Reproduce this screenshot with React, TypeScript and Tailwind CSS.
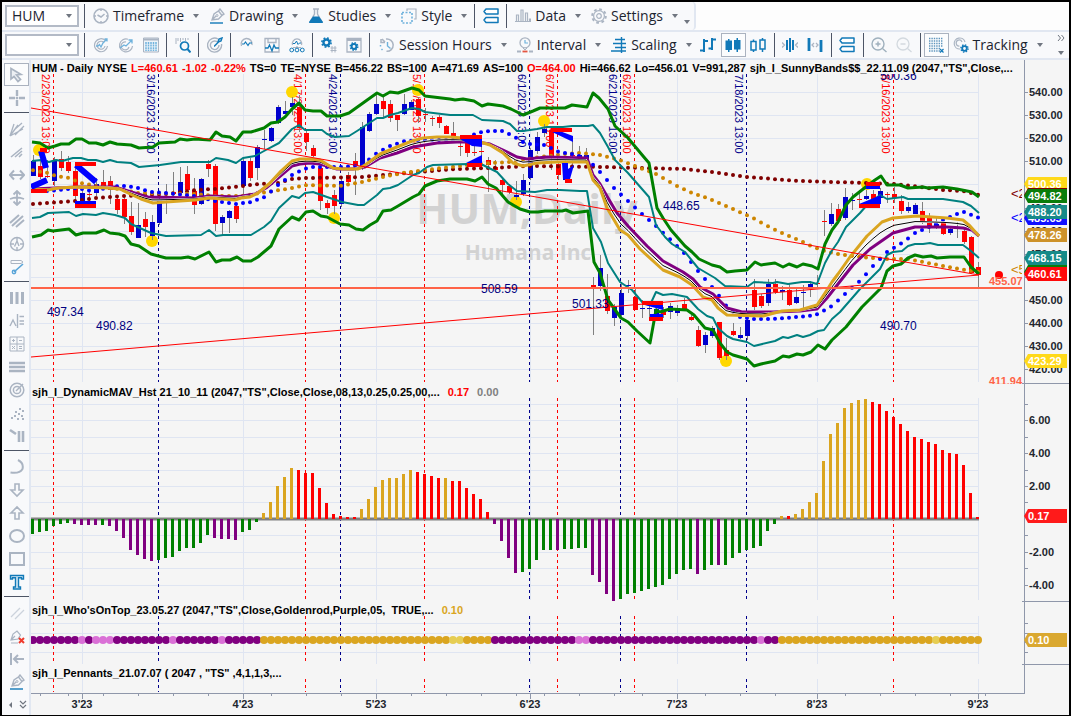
import type { ReactNode } from "react";

const BLUE = "#1179b8";
const SKY = "#6fb2dc";
const GRAY = "#aab4c2";
const NAVY = "#00008b";
const GOLD = "#daa520";
const TOMATO = "#ff6347";
const GRID = "#dfe5f2";
const AXIS = "#8f97aa";

// ---------------------------------------------------------------- icons

const ICONS: Record<string, ReactNode> = {
    clock: (
        <g fill="none" stroke={GRAY}>
            <circle cx="8" cy="8" r="7" strokeWidth="1.6" />
            <path d="M4.5 7 8 9l3.5-3M8 1v2M8 13v2M1 8h2M13 8h2" strokeWidth="1.5" />
        </g>
    ),
    pen: (
        <g fill="none">
            <path d="M3 12 5 6l4.5-3L13 7.500 9.500 11zM3 12l4-4M9.500 3 11 1l4 5-2 1.500" stroke={GRAY} strokeWidth="1.4" />
            <circle cx="8" cy="7.500" r="1" stroke={GRAY} />
            <path d="M1 15h13" stroke={BLUE} strokeWidth="1.4" />
        </g>
    ),
    flask: (
        <g>
            <path d="M5 1h6M6.500 1v5L2 14h12L9.500 6V1" fill="none" stroke={GRAY} strokeWidth="1.4" />
            <path d="M5 8.500h6l4 5.500q.2 1-1 1H2q-1.200 0-1-1z" fill={BLUE} />
        </g>
    ),
    style: (
        <g fill="none">
            <path d="M6 3V1h9v10h-2" stroke={GRAY} strokeWidth="1.2" />
            <path d="M1 4.500h10V15H1z" stroke={SKY} strokeWidth="1.6" strokeDasharray="2 1.5" />
        </g>
    ),
    stack: (
        <path d="M1 3.500 3 1h12v5H3zM1 12 3 9.500h12v5H3z" fill="#fff" stroke={BLUE} strokeWidth="1.5" strokeLinejoin="round" />
    ),
    data: (
        <path d="M1.500 13V7h2v6M6 13V2h2v11M10.500 13V5h2v8M14.500 13v-2h1v2M0 13.500h16" fill="none" stroke={GRAY} strokeWidth="1.2" />
    ),
    gear: (
        <g fill="none" stroke={GRAY}>
            <circle cx="8" cy="8" r="6.800" strokeWidth="2" strokeDasharray="2.7 2.64" />
            <circle cx="8" cy="8" r="5.400" strokeWidth="1.2" />
            <circle cx="8" cy="8" r="2.300" strokeWidth="1.2" />
        </g>
    ),
    targetWave: (
        <g fill="none">
            <path d="M12.5 3.500A6.500 6.500 0 1 0 14.5 9M11 5.500A4 4 0 1 0 12 9" stroke={GRAY} strokeWidth="1.2" />
            <path d="M3 9h2l1.500-1.500L8 10l2-4 4-4M11.500 2H14v2.500" stroke={SKY} strokeWidth="1.3" />
        </g>
    ),
    targetArrow: (
        <g fill="none">
            <path d="M10 2.200A6.500 6.500 0 1 0 14.5 9M11 10a4 4 0 1 1-3-5" stroke={GRAY} strokeWidth="1.2" />
            <path d="m2 11 4-3 2 1 6-6M10.500 3H14v3.500" stroke={SKY} strokeWidth="1.3" />
        </g>
    ),
    grid: (
        <g>
            <path d="M.5 1h15v14H.5z" fill="#eef4f9" stroke={GRAY} />
            <path d="M1 2.500h14" stroke={GRAY} strokeWidth="2" />
            <path d="M3 5v9M5.500 5v9M8 5v9M10.500 5v9M13 5v9" stroke={SKY} strokeWidth="1.5" strokeDasharray="2 .6" />
        </g>
    ),
    search: (
        <g fill="none">
            <path d="M1 1v6M3 1v3M5.500 1v4M8 1v2M10.500 1v3M13 1v2" stroke={GRAY} />
            <circle cx="9.500" cy="9" r="4" stroke={BLUE} strokeWidth="1.7" />
            <path d="m12.500 12 3 3.500" stroke={BLUE} strokeWidth="2" />
        </g>
    ),
    target: (
        <g fill="none">
            <path d="M11 2A7 7 0 1 0 14.5 7M11 5.500A4.300 4.300 0 1 0 12 8" stroke={GRAY} strokeWidth="1.4" />
            <path d="m7.500 9 4-4M11 5l1-3 3-1-1 3zM7 9h1" stroke={BLUE} strokeWidth="1.5" />
        </g>
    ),
    pulse: (
        <g fill="none">
            <path d="M2.500 9A5.500 5.500 0 1 1 13 8" stroke={GRAY} strokeWidth="1.4" />
            <path d="M3 7h2l1.500-2L9 8.500 10.500 6H13" stroke={BLUE} strokeWidth="1.2" />
        </g>
    ),
    pulseSave: (
        <g fill="none">
            <path d="M1 15V1.500h14V15zM4 1.500v4h8v-4" stroke={GRAY} strokeWidth="1.3" />
            <path d="M1 11h3l1.500-3L8 14l2-6 1.500 3H15" stroke={BLUE} strokeWidth="1.3" />
        </g>
    ),
    pulseTree: (
        <g fill="none">
            <path d="M3.500 8A4.700 4.700 0 1 1 12.500 8M8 9v2M4 10.500h8" stroke={GRAY} strokeWidth="1.2" />
            <path d="M4 6.500h2L7.500 4 9 7.500 10.500 6H12" stroke={BLUE} />
            <circle cx="2.700" cy="13" r="1.900" stroke={BLUE} />
            <circle cx="8" cy="13" r="1.900" stroke={BLUE} />
            <circle cx="13.300" cy="13" r="1.900" stroke={BLUE} />
        </g>
    ),
    gearHash: (
        <g fill="none">
            <circle cx="5.500" cy="5.500" r="3" stroke={BLUE} strokeWidth="2.4" />
            <circle cx="5.500" cy="5.500" r="4.600" stroke={BLUE} strokeWidth="1.6" strokeDasharray="1.8 1.81" />
            <path d="M11 9v6.500M14 9v6.500M9.500 11h6M9.500 13.500h6" stroke={GRAY} />
        </g>
    ),
    gearWindow: (
        <g fill="none">
            <path d="M1 1.500h14V15H1z" stroke={GRAY} strokeWidth="1.3" />
            <path d="M1 3h14" stroke={GRAY} strokeWidth="2" />
            <circle cx="8" cy="9.500" r="2.400" stroke={BLUE} strokeWidth="2" />
            <circle cx="8" cy="9.500" r="3.800" stroke={BLUE} strokeWidth="1.4" strokeDasharray="1.5 1.48" />
        </g>
    ),
    session: (
        <g fill="none">
            <path d="M7 2a6.200 6.200 0 1 1 .5 12.3M2 2v3.500h4M6 5 3 2" stroke={GRAY} strokeWidth="1.5" />
            <path d="M1.500 8v1.500M2.500 12l1 1" stroke={SKY} strokeWidth="1.5" />
            <path d="M8.500 5v4l3 2.500" stroke={SKY} strokeWidth="1.4" />
        </g>
    ),
    interval: (
        <g fill="none">
            <circle cx="8" cy="5.800" r="5" stroke={GRAY} strokeWidth="1.3" />
            <path d="M8 3v3h3" stroke={SKY} strokeWidth="1.2" />
            <path d="m6 11 2 2 2-2" stroke={GRAY} />
            <path d="M0 14.500h4M12 14.500h4" stroke={GRAY} strokeWidth="1.8" />
            <path d="M5.500 14.500h5" stroke="#e35541" strokeWidth="1.8" />
        </g>
    ),
    scaling: (
        <path d="M10.500 0v16M4 2.500h10M2 6.500h13M4 10.500h11M0 14h15" fill="none" stroke={BLUE} strokeWidth="1.4" />
    ),
    ohlc: (
        <path d="M4 2v13M0 13.500h4M4 4h4M12 1v12M8.500 11.500H12M12 2.500h4" fill="none" stroke={BLUE} strokeWidth="2" />
    ),
    candles: (
        <g fill={BLUE}>
            <path d="M.5 3.500H7V13H.5zM9 3h6.500v9.500H9z" />
            <path d="M3 2h1.500v13H3zM11.500 1H13v14h-1.500z" />
        </g>
    ),
    hollow: (
        <path d="M1 4.500h5V13H1zM3.500 2.500v2M3.500 13v2M10 3h5v9h-5zM12.500 1v2M12.500 12v3" fill="none" stroke={BLUE} strokeWidth="1.5" />
    ),
    squeeze: (
        <g fill="none">
            <path d="M5 3v10M8 1v14M11 3v10" stroke={BLUE} strokeWidth="2" />
            <path d="m0 5.500 2.500 2.500L0 10.500M16 5.500 13.500 8l2.500 2.500" stroke={GRAY} strokeWidth="1.3" />
        </g>
    ),
    spread: (
        <g fill="none">
            <path d="M2 1v13M14 3v12" stroke={BLUE} strokeWidth="2.8" />
            <path d="M7 6 5 8l2 2M9 6l2 2-2 2" stroke={GRAY} strokeWidth="1.3" />
        </g>
    ),
    zoomIn: (
        <g fill="none" stroke="#9fb0bd" strokeWidth="1.4">
            <circle cx="7" cy="7" r="6" />
            <path d="m11.500 11.500 4 3.500M4.500 7h5M7 4.500v5" />
        </g>
    ),
    zoomOut: (
        <g fill="none" stroke="#d3d9df" strokeWidth="1.3">
            <circle cx="7" cy="7" r="6" />
            <path d="m11.500 11.500 4 3.500M4.500 7h5" />
        </g>
    ),
    dots: (
        <g fill="none">
            <path d="M1 1.500h14M1 4h14M1 6.500h14M1 9h14M1 11.500h11M1 14h11" stroke="#5f95bd" strokeWidth="1.4" strokeDasharray="1.4 1" />
            <path d="m12 12 3.500 3.500m0-3.500L12 15.500" stroke={BLUE} strokeWidth="1.2" />
        </g>
    ),
    tracking: (
        <g fill="none">
            <path d="M7 12A5.500 5.500 0 1 1 12 5M6.500 9A3 3 0 1 1 9 5" stroke={GRAY} strokeWidth="1.2" />
            <circle cx="11.500" cy="11.500" r="2.300" stroke={BLUE} strokeWidth="1.8" />
            <circle cx="11.500" cy="11.500" r="3.600" stroke={BLUE} strokeWidth="1.4" strokeDasharray="1.4 1.42" />
        </g>
    ),
    pointer: <path d="M2 1.500v10.500l3-2.500 4 5 2.500-2-4-4.500 4.500-.5z" fill="#eceff3" stroke={GRAY} strokeWidth="1.7" />,
    cross: <path d="M8 0v6M8 10v6M0 8h6M10 8h6M8 7v2M7 8h2" stroke={GRAY} strokeWidth="2.4" />,
    fan: <path d="M1 15 5 3M1 15l8-11M1 15l13-7M5 9l8-7M6 14l9-9" fill="none" stroke={GRAY} strokeWidth="1.3" />,
    speed: <path d="M2 13 13 4M6 13l7-6M10 13l3-3" fill="none" stroke={GRAY} strokeWidth="1.6" />,
    horiz: <path d="M1 8h14M5 3.500.8 8 5 12.500M11 3.500 15.200 8 11 12.500" fill="none" stroke={GRAY} strokeWidth="2" />,
    vert: <path d="M8 2v12M4.500 4.500 8 1l3.500 3.500M4.500 11.500 8 15l3.500-3.500M1 9q7-3 14 0" fill="none" stroke={GRAY} strokeWidth="1.8" />,
    slants: <path d="M1 10 10 2M3 13 14 3M7 14l8-7" fill="none" stroke={GRAY} strokeWidth="2" />,
    compass: (
        <g fill="none" stroke={GRAY} strokeWidth="1.4">
            <circle cx="8" cy="8" r="6.500" />
            <path d="M8 1.500V5M8 11v3.500M1.500 8H5M11 8h3.500M5.500 10.500 8 5l2 5" />
        </g>
    ),
    ruler: (
        <g fill="none">
            <path d="M2 1.500h10l2 1.500-2 1.500H2z" stroke={GRAY} />
            <path d="m5 13 9-8" stroke="#5aa5d8" strokeWidth="1.6" />
            <circle cx="5" cy="13" r="1.700" stroke="#5aa5d8" strokeWidth="1.4" />
        </g>
    ),
    columns: <path d="M2.500 2v12M8 2v12M13.500 2v12" stroke={GRAY} strokeWidth="3" />,
    levels: <path d="M1 13 4 7l3 6M8.500 1v14M10.500 3.500H15M10.500 8H15M10.500 11H15" fill="none" stroke={GRAY} strokeWidth="1.4" />,
    calc: <path d="M1 1h14v14H1zM8 1v14M1 8h14M3 4.500h3M4.500 3v3M10 4.500h3M3 10l3 3m0-3-3 3M10 10.500h3M10 12.500h3" fill="none" stroke={GRAY} />,
    bars: <path d="M0 4h16M0 8h16M0 12h16" stroke={GRAY} strokeWidth="2.6" />,
    arcs: (
        <g fill="none" stroke={GRAY} strokeWidth="1.5">
            <circle cx="8" cy="8" r="6.800" />
            <circle cx="8" cy="8" r="3.600" />
            <path d="m7 9 7-7" />
        </g>
    ),
    scatter: <path d="M2 13h2M5 11h2M8 14h2M6 7h2M9 9h2M12 11h2M10 4h2M13 6h2M13 14h2" stroke={GRAY} strokeWidth="1.8" />,
    gap: <path d="m1 2 6 4M10 3v11M14 3v11" stroke={GRAY} strokeWidth="2.6" />,
    arc: <path d="M9 1q6 3 4.500 9-3 5-12 3.500" fill="none" stroke={GRAY} strokeWidth="2" />,
    down: <path d="M6 2h4v6h4l-6 6-6-6h4z" fill="none" stroke={GRAY} strokeWidth="1.6" />,
    up: <path d="M6 14h4V8h4L8 2 2 8h4z" fill="none" stroke={GRAY} strokeWidth="1.6" />,
    ellipse: <ellipse cx="8" cy="8" rx="7" ry="6" fill="none" stroke={GRAY} strokeWidth="2" />,
    square: <path d="M1 2h14v12H1z" fill="none" stroke={GRAY} strokeWidth="2" />,
    textTool: <path d="M1.500 1.500h13V5h-2V3.800H9.500V13h2v2h-7v-2h2V3.800h-3V5h-2z" fill="#d6eaf6" stroke={BLUE} strokeWidth="1.4" />,
    twoLines: <path d="M2 12 11 3M6 14 15 5" stroke="#ccd3dc" strokeWidth="1.3" />,
    penDelete: (
        <g fill="none">
            <path d="M2 12 4 6l4-3 3.500 4L9 11zM2 12l4-4M2 15h7" stroke={GRAY} strokeWidth="1.2" />
            <path d="m10 10 5 5m0-5-5 5" stroke="#ef3b2d" strokeWidth="2" />
        </g>
    ),
    collapse: <path d="M2 2v12M5 8h10M9 4 5 8l4 4" fill="none" stroke={GRAY} strokeWidth="2" />,
};

const Icon = ({ name }: { name: string }) => (
    <svg viewBox="0 0 16 16" className="h-4 w-4 shrink-0" aria-hidden="true">
        {ICONS[name]}
    </svg>
);

const Caret = () => (
    <svg viewBox="0 0 6 4" className="h-1 w-1.5 shrink-0" aria-hidden="true">
        <path d="M0 0h6L3 4z" fill="#707680" />
    </svg>
);

const Sep = () => <span className="mx-[3px] h-6 w-px shrink-0 bg-[#4d5566]" />;

function IconButton({ icon, label, active = false }: { icon: string; label: string; active?: boolean }) {
    return (
        <button
            aria-label={label}
            className={
                active
                    ? "flex h-6 w-[25px] shrink-0 items-center justify-center border border-[#aab2bf] bg-[#fbfcfd]"
                    : "flex h-6 w-[25px] shrink-0 items-center justify-center"
            }
        >
            <Icon name={icon} />
        </button>
    );
}

function MenuButton({ icon, label }: { icon: string; label: string }) {
    return (
        <button className="flex h-6 shrink-0 items-center gap-1 px-1 text-[14px] leading-5 text-[#1c2430]">
            <Icon name={icon} />
            <span className="mr-[5px]">{label}</span>
            <Caret />
        </button>
    );
}

function Combo({ label, value }: { label: string; value: string }) {
    return (
        <div className="relative mr-0.5 ml-[3px] shrink-0">
            <select
                aria-label={label}
                defaultValue={value}
                className="block h-[22px] w-[74px] appearance-none border-2 border-[#b3bac6] bg-white pl-[5px] text-[14px] leading-4 text-[#1c2430]"
            >
                <option value={value}>{value}</option>
            </select>
            <span className="pointer-events-none absolute top-[9px] right-[7px] flex">
                <Caret />
            </span>
        </div>
    );
}

// ---------------------------------------------------------------- series

const UPPER_GREEN =
    "32,142 40,143 48,148 55,146 61,144 69,144 76,139 82,139 89,143 96,143 103,145 110,142 117,144 131,145 139,148 153,147 159,143 175,142 180,139 187,140 195,139 210,140 216,132 222,136 230,137 236,141 243,132 251,132 264,128 271,123 278,122 285,117 292,109 299,103 305,110 313,111 321,111 327,116 340,116 349,113 363,103 377,93 383,96 390,92 398,93 412,88 419,90 425,96 450,99 455,100 463,99 474,101 482,106 488,104 503,106 511,109 523,115 533,111 540,108 565,108 572,105 587,107 593,93 599,98 608,109 615,126 628,138 643,156 649,163 657,208 663,218 671,230 685,246 692,252 699,259 712,265 720,267 727,272 735,271 747,270 755,262 761,265 775,263 783,267 789,264 797,267 803,264 812,266 818,269 825,244 832,230 838,222 846,205 853,197 867,186 875,180 881,176 887,185 900,185 908,188 923,187 928,188 943,187 957,189 972,192 979,197";
const UPPER_TEAL =
    "32,161 41,160 49,162 56,160 62,161 73,158 81,158 88,160 96,160 103,162 110,160 117,162 131,163 139,167 160,165 181,162 210,162 216,158 228,160 236,163 243,158 255,156 264,151 279,143 292,129 299,125 305,130 322,130 327,134 335,137 349,136 357,131 377,118 383,118 390,115 398,113 412,108 419,109 425,112 450,115 473,115 482,120 503,121 510,124 517,131 523,131 537,129 547,127 563,127 572,126 588,126 593,125 600,133 608,147 615,160 628,173 642,189 649,197 656,225 665,237 672,244 685,252 698,268 715,278 725,286 747,287 754,282 773,283 777,282 788,284 802,282 810,282 817,284 825,263 831,252 838,242 846,227 860,213 867,205 880,195 887,199 903,197 908,199 943,199 963,202 971,206 979,213";
const LOWER_TEAL =
    "32,218 40,217 48,213 69,212 76,216 83,214 96,215 103,213 115,215 125,218 131,224 151,233 166,236 201,235 209,230 216,236 223,235 251,235 264,227 271,221 279,208 292,196 299,198 305,193 313,192 327,197 342,202 358,205 364,205 377,195 383,189 390,188 398,185 413,175 419,173 427,167 433,165 467,164 483,165 497,172 508,184 517,191 535,192 547,190 560,190 580,191 587,191 593,228 601,242 608,263 620,282 632,290 643,303 650,305 656,292 663,295 672,294 687,297 698,309 707,316 713,318 718,328 727,336 733,339 747,342 754,346 775,341 783,337 788,338 797,335 803,337 810,335 818,331 824,330 832,319 840,312 860,289 880,269 887,255 893,252 902,251 908,246 915,244 923,244 930,243 938,245 948,245 963,245 971,251 979,258";
const LOWER_GREEN =
    "32,237 41,235 48,230 53,231 69,229 76,235 83,233 96,233 104,230 110,233 119,234 125,236 131,244 139,246 151,254 166,258 181,258 188,257 195,259 209,252 216,262 222,260 230,260 237,257 243,261 251,261 258,257 271,246 279,229 292,217 299,220 306,212 313,211 321,216 327,217 340,224 349,225 356,229 363,230 370,225 377,221 383,211 391,210 398,206 413,197 419,194 425,186 437,181 450,179 467,179 475,181 482,177 488,184 496,188 508,202 520,209 530,212 538,212 545,211 562,211 566,210 573,213 588,211 594,262 600,273 608,300 621,318 628,322 637,331 650,343 656,310 660,312 670,309 687,310 694,315 705,328 713,330 720,343 727,352 733,355 747,359 754,366 761,364 775,361 783,356 789,357 797,354 803,355 811,352 818,345 825,349 832,340 846,327 862,307 881,288 887,271 893,266 901,264 908,258 915,255 923,257 931,256 937,258 950,257 964,257 971,267 979,274";
const MID_GOLD =
    "32,189 48,190 58,188 78,187 108,188 120,189 128,193 141,199 153,203 166,202 195,200 210,198 235,200 241,198 250,197 258,193 270,183 281,171 292,161 300,159 310,159 320,160 333,168 342,169 358,169 365,165 380,154 397,147 412,141 423,138 437,137 450,137 463,138 477,141 490,145 503,153 513,163 523,166 537,163 557,162 587,162 593,180 600,188 607,208 620,230 628,235 640,249 663,270 680,277 692,285 703,297 712,300 718,308 727,315 763,316 782,311 800,310 817,305 825,293 832,282 838,274 850,257 867,236 882,222 893,218 917,216 947,218 963,220 970,226 979,236";
const MID_PURPLE =
    "32,189 55,188 78,187 115,187 128,191 148,197 195,198 210,196 236,197 255,194 266,188 278,178 292,166 300,164 310,163 320,164 337,169 353,169 365,167 380,158 397,153 413,147 437,143 457,142 477,142 490,144 503,150 517,157 527,159 547,157 587,158 593,175 600,184 608,198 617,213 628,226 647,246 663,261 683,272 693,279 700,287 713,294 727,308 742,312 773,312 800,311 817,309 827,298 838,284 853,265 870,249 893,233 915,227 947,227 963,228 972,230 979,236";
const DOTS_BLUE =
    "32,191 48,191 68,189 78,188 91,191 118,186 126,186 138,188 151,192 165,193 195,196 215,201 236,204 251,202 265,197 278,185 292,175 300,171 310,167 342,167 362,165 377,153 390,146 405,141 423,140 460,140 472,135 482,132 490,131 503,131 513,136 523,142 530,144 544,145 551,148 559,152 572,154 579,156 587,158 594,166 600,172 608,181 614,188 628,201 642,214 656,226 677,246 684,253 698,271 712,287 720,297 727,307 740,317 753,319 773,319 809,316 818,314 832,306 846,293 860,281 867,273 873,266 887,252 902,243 915,233 929,227 943,220 957,214 964,212 972,215 979,218";
const DOTS_MAROON =
    "32,204 48,203 75,201 95,198 125,196 168,194 195,190 215,189 235,187 258,184 278,183 292,179 307,178 362,177 383,175 417,172 457,169 490,168 530,166 603,167 643,168 685,169 720,173 747,177 773,179 800,181 833,182 867,183 893,184 913,186 943,190 963,191 979,195";
const DOTS_AMBER =
    "32,170 41,172 48,173 56,176 69,178 81,183 96,186 118,189 138,193 195,194 215,196 241,196 261,193 292,188 307,185 340,186 362,182 383,177 403,173 433,169 460,166 490,163 510,162 540,157 565,154 580,153 600,155 620,160 635,166 656,174 677,186 692,193 707,198 733,209 753,218 773,229 803,242 811,246 825,251 838,254 860,257 887,259 908,259 923,262 943,266 960,269 979,272";

// bar colour, high, body top, body bottom, low; one entry per session
const CANDLES =
    "b155,161,176,176 r160,166,177,179 r160,176,177,178 b157,160,181,186 r151,159,168,171 r156,162,171,173 r165,171,196,206 b186,193,205,207 r185,194,195,202 b178,184,193,196 r170,182,187,190 r176,181,190,204 r196,199,210,214 r196,199,217,224 r202,216,232,235 b203,225,238,238 r212,219,227,237 b215,222,236,240 b197,199,223,225 r184,196,197,214 r172,192,194,196 b167,182,193,196 r166,174,190,192 r178,191,205,214 b178,179,204,205 r160,164,169,177 r164,166,224,231 b215,217,223,235 b210,211,218,233 r203,206,219,223 b157,161,186,199 r158,161,178,181 b145,147,168,180 b130,139,140,149 b127,128,141,142 b105,107,123,124 b101,111,114,114 b97,103,107,115 r95,107,128,132 r130,133,142,151 r145,148,156,157 r167,168,201,210 r200,203,208,214 r190,195,206,214 b178,181,204,207 r172,175,182,185 r153,161,166,195 b122,127,168,170 b112,114,131,132 b95,104,114,115 r94,101,109,118 r100,104,118,122 r115,115,120,131 b94,104,114,115 b100,102,110,110 r97,99,116,123 r108,114,115,122 r116,118,119,126 r115,117,123,128 r125,126,134,134 r122,133,136,138 r138,146,147,156 r141,143,153,157 r140,152,153,156 r139,151,152,156 r157,160,165,192 r160,167,170,172 r178,180,185,194 r184,186,192,194 b181,195,197,200 b174,180,194,196 b148,150,178,180 b132,137,151,154 b124,129,133,137 r128,130,158,170 r162,164,175,180 b160,163,180,181 r138,155,156,165 b146,155,157,160 b148,155,160,162 r277,285,287,335 b255,268,286,291 r274,296,311,314 b304,307,318,326 b284,293,315,316 b280,285,286,293 r288,297,310,310 b300,308,309,318 b303,308,309,317 b305,309,316,320 r307,312,315,318 b303,306,312,319 b305,308,313,316 r298,304,309,311 r315,317,320,321 r326,330,346,347 b332,335,345,353 b326,328,336,338 r322,322,358,360 r338,350,356,360 r323,331,335,336 b327,335,338,339 b318,320,336,340 r279,290,307,310 r294,296,306,308 b279,284,303,306 r279,284,292,294 b286,290,292,300 r283,290,305,306 b288,297,303,304 b285,292,293,309 b281,284,288,297 r275,283,284,287 r210,221,222,236 b203,214,224,226 r204,209,221,223 b188,197,218,220 b193,200,201,210 r190,199,200,205 b190,196,199,200 r190,194,200,204 b188,191,198,201 r192,194,195,203 r187,194,198,203 r195,201,211,214 b202,207,211,213 b203,205,214,214 r202,211,222,224 r213,217,228,233 b217,224,228,229 r222,223,234,235 b226,229,233,235 b222,228,229,238 r229,231,242,244 r236,237,273,274 r262,267,275,287";

// colour key and tip of every histogram bar
const HISTOGRAM =
    "g534 g532 g531 g526 g524 g523 p524 p525 p525 p525 g525 p526 p531 p538 p550 p555 p559 p561 g560 g558 g557 g551 g548 g548 g543 g535 p538 p539 p539 p540 g532 g530 g522 y513 y502 y486 y477 y468 r470 r473 r473 r488 r503 r514 r516 r517 r517 y509 y499 y487 y480 y478 y478 y474 y470 r472 r474 r476 r478 y478 r481 r481 r488 r494 r499 r512 p524 p541 p558 p573 g572 g569 g560 g550 g550 p550 g549 g549 g548 g548 p575 p582 p594 p601 g599 g594 g593 g591 g589 g587 g585 g579 g574 g570 g569 p574 g570 g565 p565 g565 g558 g553 g550 g548 g546 g531 g524 y516 r516 y514 y509 y502 y493 y461 y434 y423 y408 y403 y400 y399 r402 r404 r411 r417 r424 r431 r437 r439 r442 r444 r450 r453 r454 r465 r493 r517";

const FILL: Record<string, string> = { b: "#0000cd", r: "#ff0000", g: "#008000", p: "#800080", y: GOLD };

const SESSIONS = [
    { x: 53, date: "2/23/2023 13:00", color: "#ff0000" },
    { x: 158, date: "3/16/2023 13:00", color: NAVY },
    { x: 305, date: "4/17/2023 13:00", color: "#ff0000" },
    { x: 340, date: "4/24/2023 13:00", color: NAVY },
    { x: 424, date: "5/10/2023 13:00", color: "#ff0000" },
    { x: 529, date: "6/1/2023 13:00", color: NAVY },
    { x: 557, date: "6/7/2023 13:00", color: "#ff0000" },
    { x: 620, date: "6/21/2023 13:00", color: NAVY },
    { x: 634, date: "6/23/2023 13:00", color: "#ff0000" },
    { x: 746, date: "7/18/2023 13:00", color: NAVY },
    { x: 893, date: "8/16/2023 13:00", color: "#ff0000" },
];

const MONTHS = [
    { x: 82, label: "3'23" },
    { x: 243, label: "4'23" },
    { x: 376, label: "5'23" },
    { x: 530, label: "6'23" },
    { x: 677, label: "7'23" },
    { x: 817, label: "8'23" },
    { x: 978, label: "9'23" },
];

const WEEKS = [40, 68, 103, 138, 173, 208, 271, 306, 341, 411, 446, 481, 516, 544, 579, 614, 642, 705, 740, 775, 845, 880, 915, 950, 985];

const PRICES = [540, 530, 520, 510, 500, 490, 480, 470, 460, 450, 440, 430, 420];
const priceY = (p: number) => Math.round(300 - (p - 450) * 2.311);

const TAGS = [
    { y: 184, text: "500.36", color: "#ffd91a" },
    { y: 195, text: "495.53", color: "#800000" },
    { y: 196, text: "494.82", color: "#0a7d0a" },
    { y: 218, text: "485.65", color: "#1010ff" },
    { y: 212, text: "488.20", color: "#178a88" },
    { y: 235, text: "478.26", color: "#cd922a" },
    { y: 258, text: "468.15", color: "#178a88" },
    { y: 272, text: "461.80", color: "#0a7d0a" },
    { y: 274, text: "460.61", color: "#ff0a0a" },
    { y: 361, text: "423.29", color: "#ffd91a" },
];

const BAR_COUNT = 136;

function valueAt(series: string, x: number) {
    const pts = series.split(" ").map((p) => p.split(",").map(Number));
    const n = pts.findIndex((p) => p[0] >= x);
    if (n === -1) return pts[pts.length - 1][1];
    if (n === 0) return pts[0][1];
    const [x0, y0] = pts[n - 1];
    const [x1, y1] = pts[n];
    return y0 + ((x - x0) / (x1 - x0)) * (y1 - y0);
}

const barXs = Array.from({ length: BAR_COUNT }, (_, i) => 33 + i * 7);
const MID_BLACK = barXs.map((x) => `${x},${(valueAt(MID_GOLD, x) + valueAt(MID_PURPLE, x)) / 2}`).join(" ");

function rankColor(i: number) {
    if ([7, 9, 10, 11, 20, 27, 78, 79, 104].includes(i)) return "#da70d6";
    if ([60, 61, 129].includes(i)) return "#e6cd52";
    if ((i >= 33 && i < 66) || i >= 107) return GOLD;
    return "#800080";
}

// ---------------------------------------------------------------- chart parts

function Dots({ series, color }: { series: string; color: string }) {
    return (
        <g fill={color}>
            {barXs.map((x) => (
                <circle key={x} cx={x} cy={valueAt(series, x)} r="2" />
            ))}
        </g>
    );
}

function Line({ points, color, width }: { points: string; color: string; width: number }) {
    return <polyline points={points} fill="none" stroke={color} strokeWidth={width} strokeLinejoin="round" />;
}

function GridLines({ ys, top, bottom }: { ys: number[]; top: number; bottom: number }) {
    return (
        <g shapeRendering="crispEdges" fill={GRID}>
            {ys.map((y) => (
                <rect key={y} x="31" y={y} width="948" height="1" />
            ))}
            {MONTHS.map((m) => (
                <rect key={m.x} x={m.x} y={top} width="1" height={bottom - top} />
            ))}
        </g>
    );
}

function SessionLines({ top, bottom }: { top: number; bottom: number }) {
    return (
        <g strokeDasharray="3 3" shapeRendering="crispEdges">
            {SESSIONS.map((s) => (
                <path key={s.x} d={`M${s.x + 0.5} ${top}V${bottom}`} stroke={s.color} />
            ))}
        </g>
    );
}

function AxisLine({ top, bottom, ticks, divider = true }: { top: number; bottom: number; ticks: number[]; divider?: boolean }) {
    return (
        <g fill={AXIS} shapeRendering="crispEdges">
            <rect x="1024" y={top} width="1" height={bottom - top} />
            {ticks.map((y) => (
                <rect key={y} x="1024" y={y} width="4" height="1" />
            ))}
            {divider && <rect x="1022" y={bottom - 1} width="47" height="1" />}
        </g>
    );
}

function Tag({ y, text, color }: { y: number; text: string; color: string }) {
    return (
        <g>
            <path d={`M1024 ${y}l4-7h39v14h-39z`} fill={color} />
            <text x="1028" y={y + 4} fill="#fff" fontWeight="bold">
                {text}
            </text>
        </g>
    );
}

function Panel({ header, viewBox, label, children }: { header: ReactNode; viewBox: string; label: string; children: ReactNode }) {
    return (
        <section aria-label={label}>
            <div className="flex h-3.5 justify-between">
                <div className="flex gap-1 pl-px text-[11px] leading-4 font-bold whitespace-pre text-black">{header}</div>
                <div className="w-[45px] shrink-0 border-l border-[#8f97aa]" />
            </div>
            <svg viewBox={viewBox} className="block h-auto w-full font-['Liberation_Sans',Arial,sans-serif] text-[11px]">
                {children}
            </svg>
        </section>
    );
}

function PricePanel() {
    const grid = PRICES.map(priceY);
    return (
        <Panel
            label="HUM daily price"
            viewBox="31 74 1038 310"
            header={
                <>
                    <span>HUM - Daily</span>
                    <span>NYSE</span>
                    <span className="text-[#ff0000]">L=460.61</span>
                    <span className="text-[#ff0000]">-1.02</span>
                    <span className="text-[#ff0000]">-0.22%</span>
                    <span>TS=0</span>
                    <span>TE=NYSE</span>
                    <span>B=456.22</span>
                    <span>BS=100</span>
                    <span>A=471.69</span>
                    <span>AS=100</span>
                    <span className="text-[#ff0000]">O=464.00</span>
                    <span>Hi=466.62</span>
                    <span>Lo=456.01</span>
                    <span>V=991,287</span>
                    <span>sjh_I_SunnyBands$$_22.11.09 (2047,"TS",Close,...</span>
                </>
            }
        >
            <GridLines ys={grid} top={74} bottom={382} />
            <g className="font-['Open_Sans',sans-serif] font-bold" fill="#d2d2d2" textAnchor="middle">
                <text x="527" y="224" fontSize="42">
                    HUM,Daily
                </text>
                <text x="528" y="260" fontSize="21">
                    Humana Inc
                </text>
            </g>
            <SessionLines top={74} bottom={382} />
            {SESSIONS.map((s) => (
                <text key={s.x} transform={`translate(${s.x - 11} 74) rotate(90)`} fill={s.color}>
                    {s.date}
                </text>
            ))}
            <g fill="#ffd700">
                {[[39, 150], [152, 241], [292, 92], [334, 218], [418, 90], [516, 202], [544, 121], [726, 361], [867, 184]].map(([x, y]) => (
                    <circle key={x} cx={x} cy={y} r="6" />
                ))}
            </g>
            <g shapeRendering="crispEdges">
                {CANDLES.split(" ").map((c, i) => {
                    const [high, top, bottom, low] = c.slice(1).split(",").map(Number);
                    return (
                        <g key={i}>
                            <rect x={33 + i * 7} y={high} width="1" height={low - high} fill="#808080" />
                            <rect x={31 + i * 7} y={top} width="5" height={Math.max(bottom - top, 1)} fill={FILL[c[0]]} />
                        </g>
                    );
                })}
            </g>
            <Dots series={DOTS_MAROON} color="#800000" />
            <Dots series={DOTS_AMBER} color="#cd8500" />
            <Dots series={DOTS_BLUE} color="#0000ff" />
            <Line points={UPPER_TEAL} color="#008080" width={2} />
            <Line points={LOWER_TEAL} color="#008080" width={2} />
            <Line points={UPPER_GREEN} color="#008000" width={3} />
            <Line points={LOWER_GREEN} color="#008000" width={3} />
            <Line points={MID_PURPLE} color="#800080" width={3} />
            <Line points={MID_BLACK} color="#ffffff" width={2} />
            <Line points={MID_BLACK} color="#000000" width={1} />
            <Line points={MID_GOLD} color={GOLD} width={3} />
            <path d="M41 151 46 168M31 187 47 180M76 165 96 182" stroke="#0000ff" strokeWidth="6" />
            <path
                d="M75 201h21v4H75zM460 139h22v8l-10-1zM466 163l16-8v8zM550 131l7-1 16 6v6zM562 163h6v6l6-4-4 14h-7zM641 304h22v6zM650 314h13v4h-13zM866 185h14v4h-14zM859 204l22-9v9z"
                fill="#0000ff"
            />
            <path
                d="M40 148h7v4h-7zM31 189h16v4H31zM75 162h21v4H75zM75 204h21v4H75zM460 135h22v4h-22zM467 163h15v4h-15zM551 128h21v4h-21zM565 179h7v4h-7zM642 301h21v4h-21zM649 317h14v4h-14zM866 182h14v4h-14zM859 204h21v4h-21z"
                fill="#ff0000"
            />
            <path d="M31 108 979 275M31 357 979 275" stroke="#ff0000" />
            <path d="M31 288h991" stroke={TOMATO} strokeWidth="2" />
            <circle cx="999" cy="275" r="4" fill="#ff0000" />
            <g fill="#000080" fontSize="12">
                <text x="47" y="316">497.34</text>
                <text x="96" y="330">490.82</text>
                <text x="481" y="293">508.59</text>
                <text x="572" y="308">501.33</text>
                <text x="663" y="210">448.65</text>
                <text x="880" y="330">490.70</text>
                <text x="880" y="80">500.36</text>
            </g>
            <g fill={TOMATO} fontWeight="bold">
                <text x="989" y="285">455.07</text>
                <text x="989" y="385">411.94</text>
            </g>
            <svg x="1010" y="180" width="12" height="100" viewBox="1010 180 12 100" fontSize="13">
                <text x="1011" y="198" fill="#800000">&lt;2</text>
                <text x="1011" y="222" fill="#0000ff">&lt;2</text>
                <text x="1011" y="274" fill="#cd8500">&lt;5</text>
            </svg>
            <AxisLine top={74} bottom={384} ticks={grid} />
            {PRICES.map((p) => (
                <text key={p} x="1029" y={priceY(p) + 4} fill="#22262e" fontWeight="bold">
                    {p.toFixed(2)}
                </text>
            ))}
            {TAGS.map((t) => (
                <Tag key={t.text} {...t} />
            ))}
        </Panel>
    );
}

function HistogramPanel() {
    const grid = [404, 420, 437, 453, 470, 486, 502, 535, 552, 568, 585];
    return (
        <Panel
            label="Dynamic moving average histogram"
            viewBox="31 398 1038 204"
            header={
                <>
                    <span>sjh_I_DynamicMAV_Hst 21_10_11 (2047,"TS",Close,Close,08,13,0.25,0.25,00,...</span>
                    <span className="pl-1 text-[#ff0000]">0.17</span>
                    <span className="pl-1 text-[#808080]">0.00</span>
                </>
            }
        >
            <GridLines ys={grid} top={398} bottom={600} />
            <SessionLines top={398} bottom={602} />
            <path d="M31 519h948" stroke="#808080" strokeWidth="3" />
            <g shapeRendering="crispEdges">
                {HISTOGRAM.split(" ").map((bar, i) => {
                    const tip = Number(bar.slice(1));
                    return (
                        <rect key={i} x={31 + i * 7} y={Math.min(tip, 519)} width="3" height={Math.abs(tip - 519)} fill={FILL[bar[0]]} />
                    );
                })}
            </g>
            <AxisLine top={398} bottom={602} ticks={grid} />
            <g fill="#22262e" fontWeight="bold">
                <text x="1029" y="424">6.00</text>
                <text x="1029" y="457">4.00</text>
                <text x="1029" y="490">2.00</text>
                <text x="1029" y="556">-2.00</text>
                <text x="1029" y="589">-4.00</text>
            </g>
            <Tag y={516} text="0.17" color="#ff1a1a" />
        </Panel>
    );
}

function RankPanel() {
    const grid = [623, 633, 642, 652];
    return (
        <Panel
            label="Who's on top"
            viewBox="31 616 1038 49"
            header={
                <>
                    <span>sjh_I_Who'sOnTop_23.05.27 (2047,"TS",Close,Goldenrod,Purple,05,  TRUE,...</span>
                    <span className="pl-1 text-[#daa520]">0.10</span>
                </>
            }
        >
            <GridLines ys={grid} top={616} bottom={664} />
            <SessionLines top={616} bottom={664} />
            {barXs.map((x, i) => (
                <circle key={x} cx={x} cy="640" r="4" fill={rankColor(i)} />
            ))}
            <AxisLine top={616} bottom={665} ticks={grid} />
            <Tag y={640} text="0.10" color="#daa830" />
        </Panel>
    );
}

function PennantsPanel() {
    return (
        <Panel label="Pennants" viewBox="31 679 1038 35" header={<span>{'sjh_I_Pennants_21.07.07 ( 2047 , "TS" ,4,1,1,3,...'}</span>}>
            <GridLines ys={[]} top={679} bottom={692} />
            <SessionLines top={679} bottom={692} />
            <AxisLine top={679} bottom={694} ticks={[]} divider={false} />
            <g fill={AXIS} shapeRendering="crispEdges">
                <rect x="31" y="693" width="994" height="1" />
                {WEEKS.map((x) => (
                    <rect key={x} x={x} y="694" width="1" height="2" />
                ))}
                {MONTHS.map((m) => (
                    <rect key={m.x} x={m.x} y="694" width="1" height="5" />
                ))}
            </g>
            <g fill="#22262e" fontWeight="bold" textAnchor="middle">
                {MONTHS.map((m) => (
                    <text key={m.x} x={m.x} y="708">
                        {m.label}
                    </text>
                ))}
            </g>
        </Panel>
    );
}

// ---------------------------------------------------------------- bars

function MainToolbar() {
    return (
        <div className="flex h-[30px] border-b-2 border-[#e1e7f1] bg-[#fdfdfd]">
            <div className="flex items-center rounded-r border-r-2 border-[#e1e7f1] bg-[#f8f9fb]">
                <Combo label="Symbol" value="HUM" />
                <Sep />
                <div className="flex gap-0.5 pl-px">
                    <MenuButton icon="clock" label="Timeframe" />
                    <MenuButton icon="pen" label="Drawing" />
                    <MenuButton icon="flask" label="Studies" />
                    <MenuButton icon="style" label="Style" />
                </div>
                <Sep />
                <IconButton icon="stack" label="Arrange windows" />
                <Sep />
                <div className="flex gap-0.5 pl-px">
                    <MenuButton icon="data" label="Data" />
                    <MenuButton icon="gear" label="Settings" />
                </div>
                <button aria-label="More commands" className="mt-3 mr-1 ml-0.5">
                    <Caret />
                </button>
            </div>
        </div>
    );
}

function ChartToolbar() {
    return (
        <div className="flex h-[28px] items-center border-b-2 border-[#e1e7f1] bg-[#f8f9fb]">
            <Combo label="Interval preset" value="" />
            <Sep />
            <IconButton icon="targetWave" label="Analysis" />
            <IconButton icon="targetArrow" label="Trend analysis" />
            <IconButton icon="grid" label="Data grid" />
            <Sep />
            <IconButton icon="search" label="Symbol lookup" />
            <Sep />
            <IconButton icon="target" label="Strategy" />
            <Sep />
            <IconButton icon="pulse" label="Add study" />
            <IconButton icon="pulseSave" label="Save study" />
            <IconButton icon="pulseTree" label="Study group" />
            <Sep />
            <IconButton icon="gearHash" label="Format symbol" />
            <IconButton icon="gearWindow" label="Format window" />
            <Sep />
            <div className="flex gap-0.5 pl-0.5">
                <MenuButton icon="session" label="Session Hours" />
                <MenuButton icon="interval" label="Interval" />
                <MenuButton icon="scaling" label="Scaling" />
            </div>
            <IconButton icon="ohlc" label="Bar style" />
            <IconButton icon="candles" label="Candlesticks" active />
            <IconButton icon="hollow" label="Hollow candlesticks" />
            <Sep />
            <IconButton icon="squeeze" label="Decrease spacing" />
            <IconButton icon="spread" label="Increase spacing" />
            <Sep />
            <IconButton icon="stack" label="Panes" />
            <Sep />
            <IconButton icon="zoomIn" label="Zoom in" />
            <IconButton icon="zoomOut" label="Zoom out" />
            <Sep />
            <IconButton icon="dots" label="Show grid" active />
            <MenuButton icon="tracking" label="Tracking" />
            <button aria-label="More tools" className="ml-auto flex h-5 flex-col items-center justify-between pr-1">
                <svg viewBox="0 0 8 6" className="h-1.5 w-2 shrink-0" aria-hidden="true">
                    <path d="m1 0 2.500 3L1 6M4.500 0 7 3 4.500 6" fill="none" stroke="#707680" />
                </svg>
                <Caret />
            </button>
        </div>
    );
}

const TOOL_GROUPS: [string, string][][] = [
    [["pointer", "Pointer"], ["cross", "Crosshair"]],
    [["fan", "Speed fan"], ["speed", "Speed lines"], ["horiz", "Horizontal line"], ["vert", "Vertical line"], ["slants", "Parallel lines"], ["compass", "Time cycle"], ["ruler", "Trendline"]],
    [["columns", "Time zones"], ["levels", "Price levels"], ["calc", "Calculator"], ["bars", "Retracement"], ["arcs", "Arcs"], ["scatter", "Regression"], ["gap", "Bar gap"]],
    [["arc", "Arc"], ["down", "Down arrow"], ["up", "Up arrow"], ["ellipse", "Ellipse"], ["square", "Rectangle"], ["textTool", "Text"]],
    [["twoLines", "Extend lines"], ["penDelete", "Delete drawings"], ["collapse", "Collapse"], ["pen", "Format drawing"]],
];

function DrawingTools() {
    return (
        <nav aria-label="Drawing tools" className="flex w-[29px] shrink-0 flex-col border-r-2 border-[#e1e7f1] bg-[#f8f9fb] pt-[3px] pl-0.5">
            {TOOL_GROUPS.map((group, g) => (
                <div key={g} className={g > 0 ? "mt-[3px] border-t border-[#4d5566] pt-1" : ""}>
                    {group.map(([icon, label]) => (
                        <button
                            key={icon}
                            aria-label={label}
                            className={
                                icon === "pointer"
                                    ? "flex h-[23px] w-full items-center justify-center border border-[#aab2bf] bg-[#fbfcfd]"
                                    : "flex h-[23px] w-full items-center justify-center"
                            }
                        >
                            <Icon name={icon} />
                        </button>
                    ))}
                </div>
            ))}
            <button aria-label="More drawing tools" className="mt-0.5 flex h-5 w-full items-center justify-center">
                <svg viewBox="0 0 20 10" className="h-2.5 w-5" aria-hidden="true">
                    <path d="M5 2v6L2 5z" fill="#707680" />
                    <path d="m13 1 3 3 3-3M13 5l3 3 3-3" fill="none" stroke="#707680" strokeWidth="1.2" />
                </svg>
            </button>
        </nav>
    );
}

export default function App() {
    return (
        <div className="min-h-screen bg-black p-0.5 font-['Open_Sans','Noto_Sans',sans-serif]">
            <MainToolbar />
            <ChartToolbar />
            <div className="flex bg-[#f5f5f5]">
                <DrawingTools />
                <main className="min-w-0 flex-1 overflow-hidden font-['Liberation_Sans',Arial,sans-serif]">
                    <PricePanel />
                    <HistogramPanel />
                    <RankPanel />
                    <PennantsPanel />
                </main>
            </div>
        </div>
    );
}
